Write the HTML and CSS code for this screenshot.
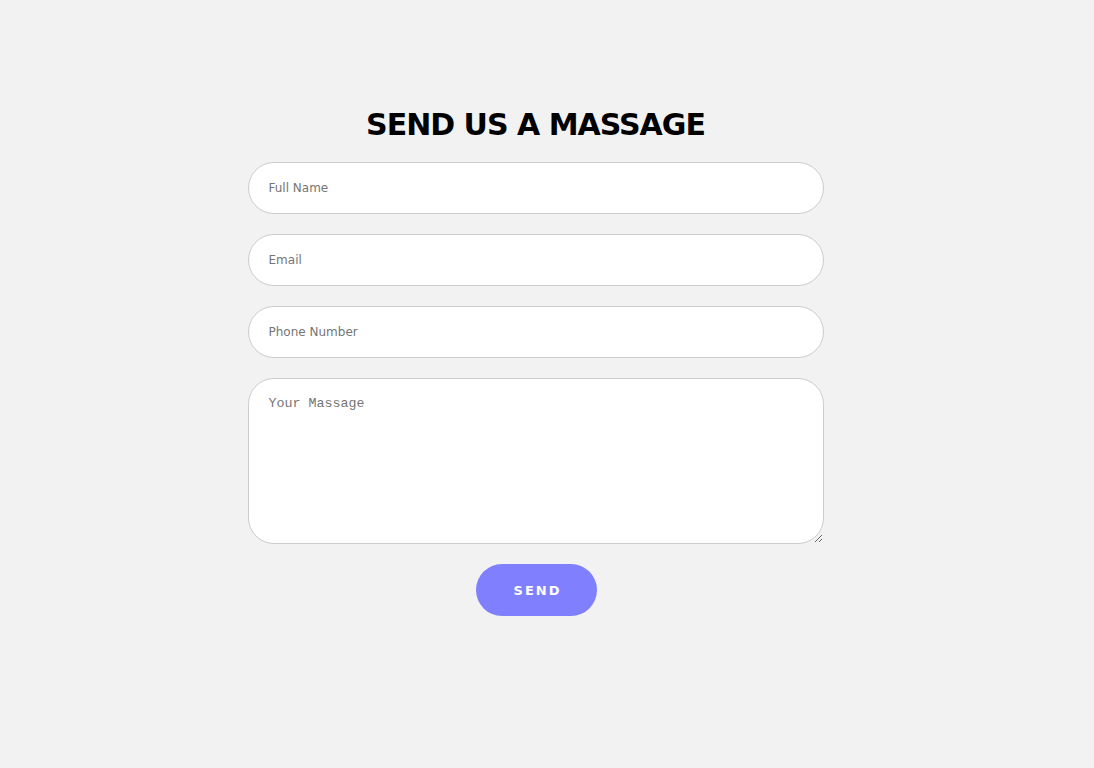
FILE: index.html
```html
<!DOCTYPE html>
<html lang="en">
<head>
<meta charset="utf-8">
<title>Contact</title>
<link rel="stylesheet" href="styles.css">
</head>
<body>
<div class="page">
  <form class="contact">
    <h1 class="title">SEND US A MASSAGE</h1>
    <input class="field" type="text" placeholder="Full Name">
    <input class="field" type="email" placeholder="Email">
    <input class="field" type="text" placeholder="Phone Number">
    <textarea class="field area" placeholder="Your Massage"></textarea>
    <button class="send" type="button">SEND</button>
  </form>
</div>
</body>
</html>
```
FILE: styles.css
```css
html, body {
  margin: 0;
  padding: 0;
  background: #f2f2f2;
}
body {
  font-family: "DejaVu Sans", Verdana, sans-serif;
}
.page {
  display: flex;
  justify-content: center;
  padding: 102px 23px 0 0;
}
.contact {
  width: 576px;
  display: flex;
  flex-direction: column;
  align-items: center;
  gap: 20px;
}
.title {
  margin: 2px 0 -4px;
  font-size: 30px;
  line-height: 42px;
  font-weight: bold;
  color: #000;
  letter-spacing: -1px;
}
.field {
  box-sizing: border-box;
  width: 100%;
  height: 52px;
  border: 1px solid #cccccc;
  border-radius: 26px;
  background: #fff;
  padding: 0 20px;
  font-family: "DejaVu Sans", Verdana, sans-serif;
  font-size: 12px;
  color: #333;
  outline: none;
}
.field::placeholder {
  color: #757575;
}
.area {
  height: 166px;
  padding: 17px 20px;
  font-family: "Liberation Mono", "Courier New", monospace;
  font-size: 13.33px;
  resize: vertical;
}
.send {
  width: 121px;
  height: 52px;
  margin-left: 2px;
  border: none;
  border-radius: 26px;
  background: #8080ff;
  color: #fff;
  font-family: "DejaVu Sans", Verdana, sans-serif;
  font-weight: bold;
  font-size: 13px;
  letter-spacing: 2px;
  padding: 0 0 0 2px;
  cursor: pointer;
}
```
